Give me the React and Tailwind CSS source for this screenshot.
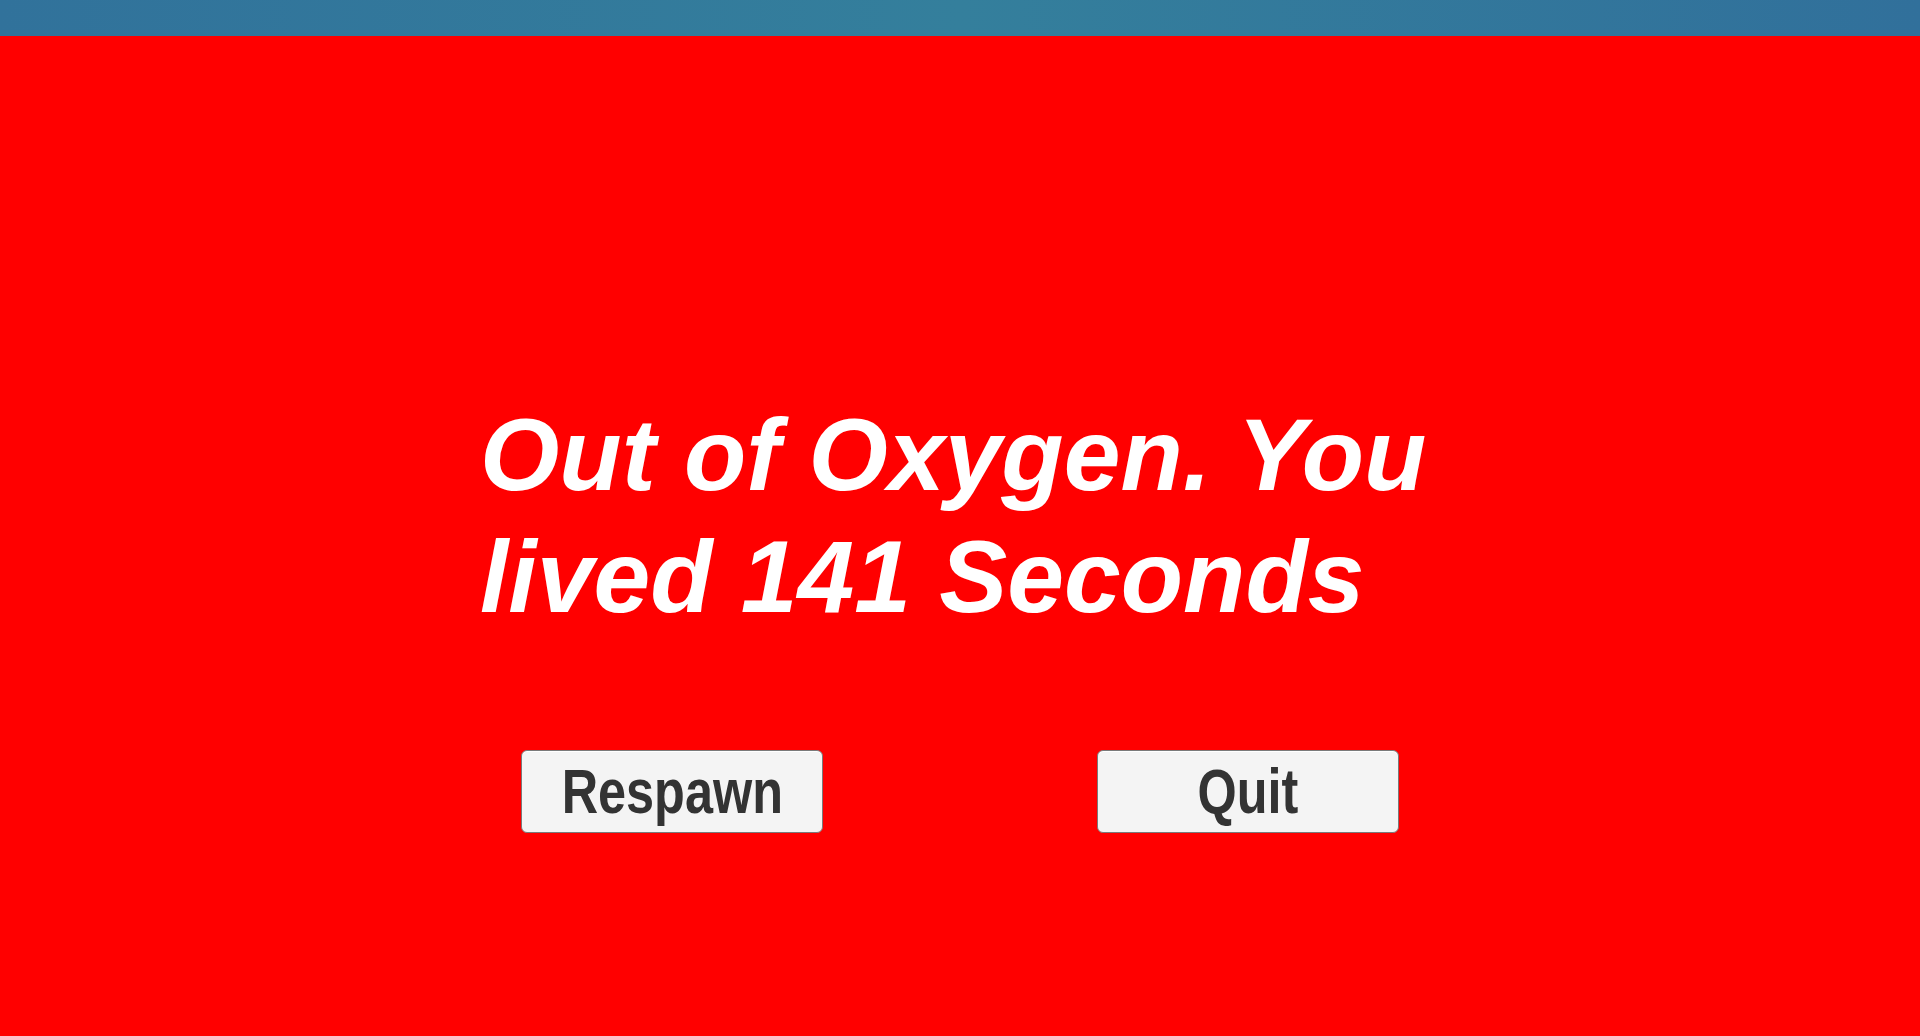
const GameButton = ({ label }) => (
  <button className="w-[302px] h-[83px] rounded-[6px] border border-[#7a7a7a] bg-[#f4f4f4] shadow-[inset_0_1px_0_#ffffff] flex items-center justify-center">
    <span className="inline-block scale-x-[0.8] text-[63px] leading-none font-bold text-[#333333] font-['Liberation_Sans',Arial,sans-serif]">
      {label}
    </span>
  </button>
);

export default function App() {
  return (
    <div className="h-screen flex flex-col bg-[#ff0000] font-['Liberation_Sans',Arial,sans-serif]">
      <div className="h-[36px] shrink-0 bg-gradient-to-r from-[#31729b] via-[#347f9c] to-[#31709b]" />
      <div className="flex-1 flex flex-col pt-[358px]">
        <div className="pl-[480px] text-white font-bold italic text-[102px] leading-[122px]">
          <div>Out of Oxygen. You</div>
          <div>lived 141 Seconds</div>
        </div>
        <div className="mt-[112px] pl-[521px] flex gap-[274px]">
          <GameButton label="Respawn" />
          <GameButton label="Quit" />
        </div>
      </div>
    </div>
  );
}
